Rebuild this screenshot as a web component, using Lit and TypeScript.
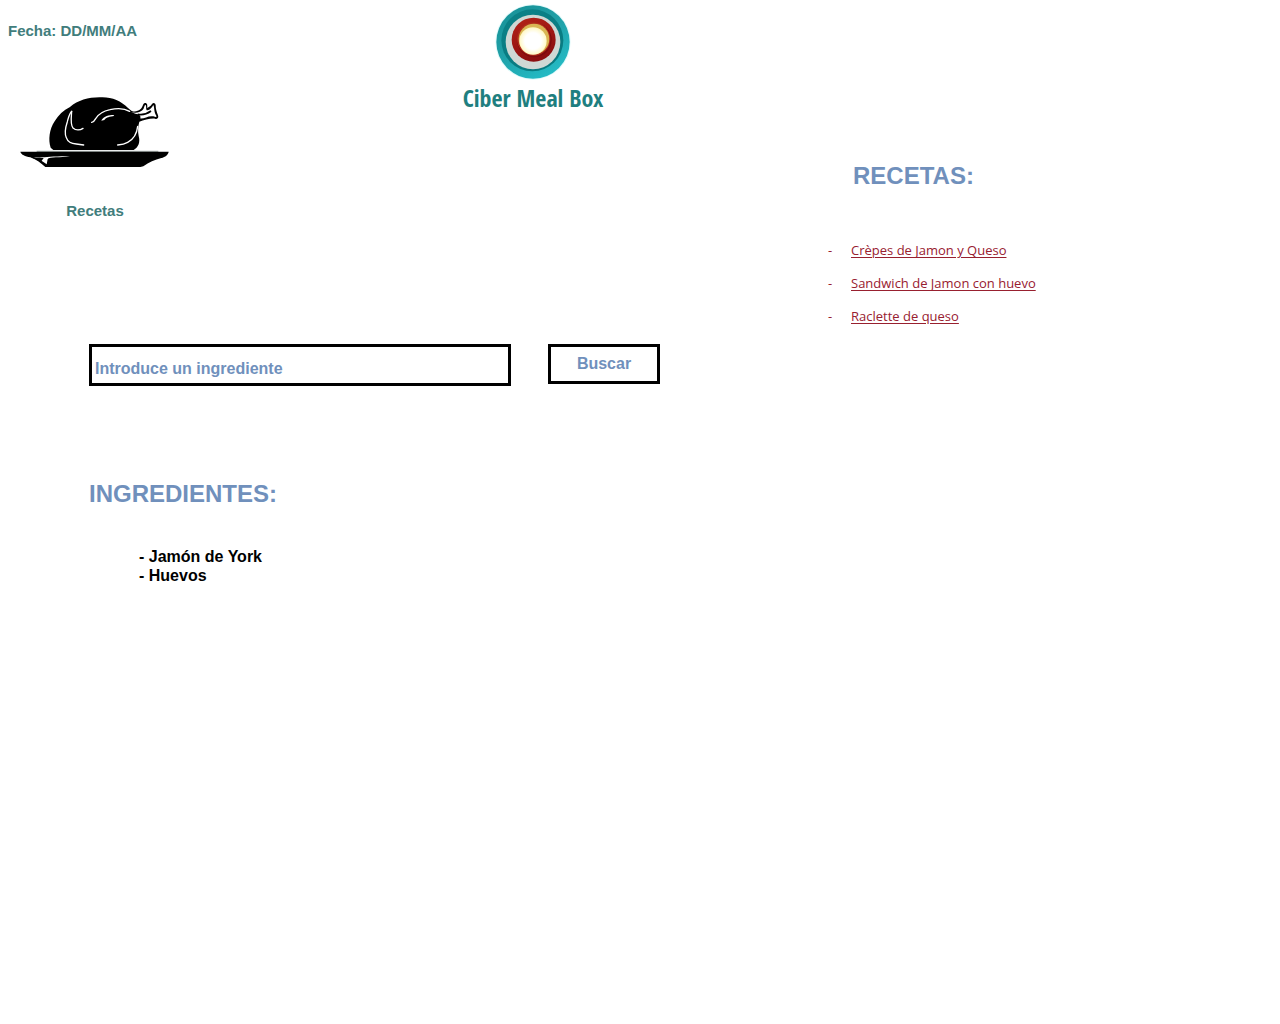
import { LitElement, html, css } from "lit";
import { customElement, state } from "lit/decorators.js";

@customElement("meal-logo")
export class MealLogo extends LitElement {
  static styles = css`
    :host {
      display: flex;
      flex-direction: column;
      align-items: center;
      gap: 4px;
    }
    .rings {
      width: 76px;
      height: 76px;
    }
    .name {
      font: bold 24px/28px "Liberation Sans Narrow", "Open Sans Condensed", "Roboto Condensed", sans-serif;
      color: #1f7f80;
      white-space: nowrap;
    }
  `;

  render() {
    return html`
      <svg class="rings" viewBox="135 12 228 228" aria-hidden="true">
        <defs>
          <linearGradient id="outer" x1="0" y1="0" x2="0.6" y2="1">
            <stop offset="0" stop-color="#168f95" />
            <stop offset="0.5" stop-color="#1f9fa6" />
            <stop offset="1" stop-color="#24b9c3" />
          </linearGradient>
          <linearGradient id="inner" x1="0" y1="0" x2="0.5" y2="1">
            <stop offset="0" stop-color="#0c8288" />
            <stop offset="1" stop-color="#087a80" />
          </linearGradient>
          <linearGradient id="red" x1="0" y1="0" x2="0.4" y2="1">
            <stop offset="0" stop-color="#b52218" />
            <stop offset="1" stop-color="#8c0f10" />
          </linearGradient>
          <radialGradient id="light">
            <stop offset="0.6" stop-color="#ffffff" />
            <stop offset="1" stop-color="#fff8c4" />
          </radialGradient>
        </defs>
        <circle cx="249" cy="126" r="113" fill="#e2fafb" />
        <circle cx="249" cy="126" r="110" fill="url(#outer)" />
        <circle cx="247" cy="121" r="93" fill="url(#inner)" />
        <circle cx="249" cy="126" r="82" fill="#cfd8d4" />
        <circle cx="251" cy="119" r="66" fill="url(#red)" />
        <circle cx="253" cy="120" r="52" fill="#7d0b0d" />
        <circle cx="251" cy="117" r="50" fill="#b02c1b" />
        <circle cx="252" cy="117" r="46" fill="#d9b654" />
        <circle cx="249" cy="123" r="41" fill="url(#light)" />
      </svg>
      <span class="name">Ciber Meal Box</span>
    `;
  }
}

@customElement("roast-figure")
export class RoastFigure extends LitElement {
  static styles = css`
    .figure {
      display: inline-flex;
      flex-direction: column;
      align-items: center;
      gap: 34px;
      margin: 0;
    }
    .roast {
      width: 150px;
      height: 73px;
    }
    .caption {
      font-size: 15px;
      line-height: 18px;
    }
  `;

  render() {
    return html`
      <figure class="figure">
        <svg class="roast" viewBox="30 30 450 219" aria-hidden="true">
          <path
            d="M122 188 C114 165 118 132 134 109 C145 90 160 76 180 66 C205 45 238 36 274 37 C305 36 333 48 354 69 L364 77 C374 82 383 79 391 73 C399 67 398 54 405 54 C413 54 412 62 412 69 C416 65 422 65 426 57 C430 51 437 54 437 61 C437 73 440 80 444 91 C447 99 442 104 435 101 C420 100 402 105 388 110 C384 124 383 139 386 153 C391 171 386 186 371 195 L130 195 Z"
          />
          <path
            fill="#fff"
            d="M362 80 C377 86 388 82 397 76 C403 71 402 62 406 59 C411 63 406 75 412 76 C420 74 425 69 430 60 C434 67 431 80 439 92 C440 98 437 96 430 94 C415 91 402 102 390 100 C395 94 388 87 376 86 Z"
          />
          <g fill="none" stroke="#fff" stroke-width="4" stroke-linecap="round" stroke-linejoin="round">
            <path d="M185 79 C178 86 175 99 172 110 C166 128 163 145 169 158 C173 171 184 176 199 177 L221 180" />
            <path d="M185 79 C184 96 180 119 189 129 C198 137 211 135 219 130" />
            <path d="M245 112 C251 111 253 109 257 101 C266 86 281 78 300 74 C321 69 344 70 359 79" />
            <path d="M383 124 C381 143 372 162 353 172 C344 177 333 179 323 180" />
          </g>
          <path fill="#fff" d="M274 107 C278 97 291 91 306 90 C314 89 315 92 308 94 C294 96 288 99 283 105 Z" />
          <path fill="none" stroke="#000" stroke-width="5" d="M383 88 C398 91 411 87 423 78" />
          <path fill="#a9b0ae" d="M80 197 H445 V201 H80 Z" />
          <path d="M31 200 H476 C475 209 466 216 454 219 C434 224 417 231 400 244 L391 246 H106 C93 235 80 224 61 217 C45 213 34 210 31 200 Z" />
          <path fill="#fff" d="M70 216 C98 220 120 213 180 214 C151 218 118 216 113 222 L110 238 C99 229 86 222 70 216 Z" />
          <path d="M62 217 L101 219 L94 229 Z" />
        </svg>
        <figcaption class="caption">Recetas</figcaption>
      </figure>
    `;
  }
}

@customElement("app-root")
export class AppRoot extends LitElement {
  static styles = css`
    :host {
      display: block;
      min-height: 100vh;
      background: #fff;
      font-family: "Liberation Sans", Arial, sans-serif;
      font-weight: bold;
    }
    .page {
      display: grid;
      grid-template-columns: 41fr 23fr;
    }
    .top {
      display: grid;
      grid-template-columns: 246px 1fr;
      align-items: start;
      color: #417d7c;
    }
    .intro {
      display: flex;
      flex-direction: column;
      gap: 55px;
      padding-top: 22px;
    }
    .date {
      margin: 0;
      padding-left: 8px;
      font-size: 15px;
      line-height: 18px;
    }
    .roast {
      padding-left: 20px;
    }
    .logo {
      padding-top: 4px;
    }
    .search {
      display: flex;
      align-items: flex-start;
      gap: 37px;
      margin-top: 124px;
      padding: 0 160px 0 89px;
    }
    .field,
    .submit {
      box-sizing: border-box;
      margin: 0;
      border: 3px solid #000;
      border-radius: 0;
      background: #fff;
      color: #7090bc;
      font: inherit;
      font-size: 16px;
    }
    .field {
      flex: 1;
      min-width: 0;
      height: 42px;
      padding: 7px 3px 0;
    }
    .field::placeholder {
      color: #7090bc;
      opacity: 1;
    }
    .submit {
      width: 112px;
      height: 40px;
      padding: 0;
      cursor: pointer;
    }
    .title {
      margin: 0;
      color: #7090bc;
      font-size: 24px;
      line-height: 28px;
    }
    .ingredients {
      margin-top: 94px;
      padding-left: 89px;
    }
    .items {
      margin: 0;
      padding: 39px 0 0 50px;
      list-style: none;
      font-size: 16px;
      line-height: 19px;
    }
    .recipes {
      padding-top: 162px;
    }
    .recipes .title {
      padding-left: 33px;
    }
    .links {
      margin: 0;
      padding: 44px 0 0 8px;
      list-style: none;
      color: #98202f;
      font: 13px/33px "Open Sans", "Noto Sans", sans-serif;
    }
    .entry {
      display: grid;
      grid-template-columns: 23px 1fr;
    }
    .link {
      color: inherit;
      text-underline-offset: 2px;
    }
  `;

  @state() private ingredients = ["Jamón de York", "Huevos"];

  private recipes = ["Crèpes de Jamon y Queso", "Sandwich de Jamon con huevo", "Raclette de queso"];

  private addIngredient(event: Event) {
    event.preventDefault();
    const form = event.target as HTMLFormElement;
    const value = String(new FormData(form).get("ingredient") ?? "").trim();
    if (value) {
      this.ingredients = [...this.ingredients, value];
      form.reset();
    }
  }

  render() {
    return html`
      <div class="page">
        <main>
          <header class="top">
            <div class="intro">
              <p class="date">Fecha: DD/MM/AA</p>
              <roast-figure class="roast"></roast-figure>
            </div>
            <meal-logo class="logo"></meal-logo>
          </header>
          <form class="search" @submit=${this.addIngredient}>
            <input
              class="field"
              type="text"
              name="ingredient"
              aria-label="Introduce un ingrediente"
              placeholder="Introduce un ingrediente"
            />
            <button class="submit" type="submit">Buscar</button>
          </form>
          <section class="ingredients">
            <h2 class="title">INGREDIENTES:</h2>
            <ul class="items">
              ${this.ingredients.map((name) => html`<li>- ${name}</li>`)}
            </ul>
          </section>
        </main>
        <aside class="recipes">
          <h2 class="title">RECETAS:</h2>
          <ul class="links">
            ${this.recipes.map(
              (name) => html`<li class="entry"><span>-</span><span><a class="link" href="#">${name}</a></span></li>`
            )}
          </ul>
        </aside>
      </div>
    `;
  }
}
